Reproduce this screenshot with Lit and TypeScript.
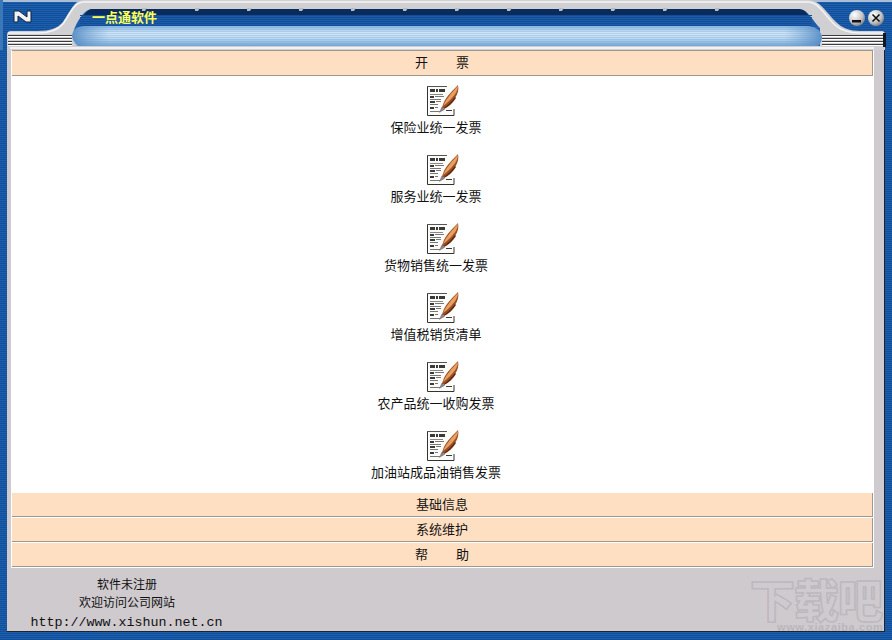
import { LitElement, html, css, svg } from "lit";
import { customElement } from "lit/decorators.js";

const items = ["保险业统一发票", "服务业统一发票", "货物销售统一发票", "增值税销货清单", "农产品统一收购发票", "加油站成品油销售发票"];

const stripes = (x: number, w: number, y0: number, y1: number, color: string, step = 2) => {
  const out = [];
  for (let y = y0; y < y1; y += step) out.push(svg`<rect x=${x} y=${y} width=${w} height="1" fill=${color} />`);
  return out;
};

const chrome = svg`<svg class="chrome" width="892" height="50" viewBox="0 0 892 50">
  <defs>
    <linearGradient id="lb" x1="0" y1="0" x2="0" y2="1">
      <stop offset="0" stop-color="#8ab8e2"/><stop offset=".35" stop-color="#d2e6f8"/><stop offset=".6" stop-color="#c0daf2"/><stop offset="1" stop-color="#76a8d6"/>
    </linearGradient>
    <linearGradient id="lbh" x1="0" y1="0" x2="1" y2="0">
      <stop offset="0" stop-color="#4f86c0" stop-opacity=".9"/><stop offset=".05" stop-color="#6fa0d0" stop-opacity="0"/>
      <stop offset=".95" stop-color="#6fa0d0" stop-opacity="0"/><stop offset="1" stop-color="#4f86c0" stop-opacity=".9"/>
    </linearGradient>
    <radialGradient id="btn" cx=".35" cy=".3" r=".8">
      <stop offset="0" stop-color="#ffffff"/><stop offset=".6" stop-color="#c4c4c4"/><stop offset="1" stop-color="#6c7480"/>
    </radialGradient>
  </defs>
  <rect width="892" height="50" fill="#1c5fae"/>
  ${stripes(0, 892, 1, 50, "#134f98")}
  <rect x="0" y="0" width="892" height="2" fill="#a9bed6"/>
  <path d="M84 0 H808 C820 0 826 12 836 22 C842 28 850 31 860 31 H882 Q885 31 885 35 V50 H7 V35 Q7 31 11 31 H38 C50 31 58 28 63 22 C70 12 74 0 84 0 Z" fill="#d0cfd2"/>
  <path d="M84 2 H808 C818 2 824 14 834 24 C840 30 850 33 860 33 H884" fill="none" stroke="#f4f4f6" stroke-width="1.5"/>
  <path d="M84 2 C74 2 70 14 63 24 C58 30 50 33 38 33 H8" fill="none" stroke="#f4f4f6" stroke-width="1.5"/>
  <path d="M92 9 H798 C808 9 812 20 820 28 V46 H78 Q72 40 73 34 C75 24 84 9 92 9 Z" fill="#1c5cab"/>
  <path d="M92 9 H798 C802 9 806 11 808 15 H84 C87 11 89 9 92 9 Z" fill="#0a2c5c"/>
  ${stripes(80, 732, 15, 27, "#124d96")}
  <path d="M86 26 H806 C814 26 820 30 822 36 C822 40 820 46 816 46 H78 Q72 40 72 36 C72 30 78 26 86 26 Z" fill="url(#lb)"/>
  <path d="M86 26 H806 C814 26 820 30 822 36 C822 40 820 46 816 46 H78 Q72 40 72 36 C72 30 78 26 86 26 Z" fill="url(#lbh)"/>
  ${stripes(74, 746, 27, 46, "#5f96cc40")}
  ${[142, 195, 247, 299, 351, 403, 455, 507, 559, 611, 663, 715].map((x) => svg`<path d=${`M${x} 8h5l-2 3h-3z`} fill="#b8bcc4"/>`)}
  ${stripes(8, 64, 35, 46, "#3c3c40", 3)}
  ${stripes(8, 64, 36, 46, "#ffffff", 3)}
  ${stripes(822, 63, 35, 46, "#3c3c40", 3)}
  ${stripes(822, 63, 36, 46, "#ffffff", 3)}
  <rect x="7" y="46" width="878" height="1" fill="#d0cfd2"/>
  <rect x="10" y="47" width="864" height="2" fill="#f2f2f4"/>
  <rect x="883" y="33" width="3" height="14" fill="#101820"/>
  <rect x="0" y="0" width="3" height="50" fill="#3b78b8"/>
  <path d="M14 11 L14 22 L18 22 L18 16 L26 22 L31 22 L31 11 L27 11 L27 17 L19 11 Z" fill="#f2f2f2" stroke="#10233f" stroke-width="1"/>
  <circle cx="857" cy="18" r="8" fill="url(#btn)"/>
  <rect x="852" y="20" width="9" height="2.5" fill="#111"/>
  <circle cx="876" cy="18" r="8" fill="url(#btn)"/>
  <path d="M872.5 14.5 L879.500 21.500 M879.500 14.500 L872.500 21.500" stroke="#111" stroke-width="1.6"/>
</svg>`;

const docIcon = svg`<svg class="icon" width="32" height="31" viewBox="0 0 32 31">
  <rect x="0" y="1" width="26" height="29" fill="#fbfbf8"/>
  <path d="M.5 1V30.500H27V24" stroke="#333" stroke-width="1" fill="none"/>
  <path d="M0 1.500H20" stroke="#555" stroke-width="1" fill="none"/>
  <g fill="#3a3a3a" shape-rendering="crispEdges">
    <rect x="3" y="4" width="5" height="3"/><rect x="9" y="4" width="2" height="3"/><rect x="12" y="4" width="6" height="3"/>
    <rect x="3" y="9" width="13" height="1" fill="#888"/>
    <rect x="3" y="11" width="4" height="2"/><rect x="8" y="11" width="9" height="1" fill="#777"/>
    <rect x="3" y="14" width="11" height="1" fill="#777"/>
    <rect x="3" y="16" width="5" height="2"/><rect x="9" y="16" width="5" height="1" fill="#777"/>
    <rect x="3" y="19" width="8" height="1" fill="#777"/>
    <rect x="3" y="22" width="4" height="2"/><rect x="8" y="22" width="3" height="1" fill="#777"/>
    <rect x="19" y="25" width="6" height="1"/><rect x="3" y="26" width="10" height="1" fill="#777"/>
  </g>
  <path d="M14 25 L17 17 C20 11 26 5 31 0 C32 4 31 9 28 13 C25 18 20 22 14 25 Z" fill="#9a4e24"/>
  <path d="M16 21 C19 14 25 7 31 1 C31 6 27 11 23 15 C21 17 19 19 16 21 Z" fill="#e8a060"/>
  <path d="M17 23 C21 20 25 16 28 12 L29 13 C26 18 21 22 17 24 Z" fill="#5e2610"/>
  <path d="M12 28 L14.500 22 L18 24.500 Z" fill="#86808e"/>
</svg>`;

@customElement("app-root")
export class AppRoot extends LitElement {
  static styles = css`
    :host {
      display: flex;
      flex-direction: column;
      position: relative;
      width: 892px;
      height: 640px;
      overflow: hidden;
      background: repeating-linear-gradient(#1c5fae 0 1px, #134f98 1px 2px);
      font-family: "Noto Sans CJK SC", "Liberation Sans", sans-serif;
      font-size: 13px;
      color: #111;
    }
    .top { height: 50px; flex: none; position: relative; }
    .chrome { display: block; }
    .title {
      position: absolute;
      left: 92px;
      top: 8px;
      font-weight: 700;
      font-size: 13px;
      line-height: 18px;
      color: #ffff55;
    }
    .frame {
      flex: 1;
      margin: 0 7px 8px 7px;
      background: #cecace;
      display: flex;
      flex-direction: column;
      border-bottom: 1px solid #1c2430;
      border-right: 1px solid #1c2430;
      min-height: 0;
    }
    .panel {
      margin: 0 10px 0 4px;
      flex: none;
      display: flex;
      flex-direction: column;
      background: #fff;
      border-left: 1px solid #fff;
      border-right: 1px solid #fff;
    }
    .bar {
      height: 24px;
      box-sizing: border-box;
      flex: none;
      background: #ffdfc2;
      border-bottom: 1px solid #9c9890;
      border-right: 1px solid #9c9890;
      display: flex;
      align-items: center;
      justify-content: center;
      line-height: 1;
      margin-bottom: 1px;
      padding-bottom: 2px;
      color: #111;
    }
    .bar.first { height: 26px; border-top: 1px solid #9c9890; margin-bottom: 0; padding-bottom: 3px; }
    .bar .gap { word-spacing: 25px; }
    .list {
      height: 417px;
      padding: 9px 13px 0 0;
      box-sizing: border-box;
      display: flex;
      flex-direction: column;
      align-items: center;
      background: #fff;
    }
    .item {
      height: 69px;
      flex: none;
      display: flex;
      flex-direction: column;
      align-items: center;
      box-sizing: border-box;
    }
    .icon { display: block; margin-left: 14px; }
    .label { margin-top: 2px; line-height: 18px; white-space: nowrap; color: #111; }
    .foot {
      padding-top: 7px;
      margin-left: 12px;
      text-align: center;
      font-size: 12px;
      line-height: 18px;
      flex: none;
      width: 216px;
    }
    .url { font-family: "Liberation Mono", monospace; font-size: 13.33px; line-height: 20px; white-space: nowrap; margin: 2px 0 0 -1px; }
    .mark {
      position: absolute;
      left: 750px;
      top: 577px;
      font-size: 45px;
      font-weight: 900;
      line-height: 44px;
      letter-spacing: -1px;
      white-space: nowrap;
      color: #cecace;
      -webkit-text-stroke: 1.5px #bcb8be;
    }
    .markurl {
      position: absolute;
      left: 777px;
      top: 622px;
      font-family: "Liberation Sans", sans-serif;
      font-size: 11px;
      font-weight: 700;
      letter-spacing: 0.6px;
      line-height: 10px;
      color: #bab6bc;
      white-space: nowrap;
    }
  `;

  render() {
    return html`
      <div class="top">${chrome}<div class="title">一点通软件</div></div>
      <div class="frame">
        <div class="panel">
          <div class="bar first"><span class="gap">开 票</span></div>
          <div class="list">
            ${items.map((t) => html`<div class="item">${docIcon}<div class="label">${t}</div></div>`)}
          </div>
          <div class="bar">基础信息</div>
          <div class="bar">系统维护</div>
          <div class="bar"><span class="gap">帮 助</span></div>
        </div>
        <div class="foot">
          <div>软件未注册</div>
          <div>欢迎访问公司网站</div>
          <div class="url">http://www.xishun.net.cn</div>
        </div>
      </div>
      <div class="mark">下载吧</div>
      <div class="markurl">www.xiazaiba.com</div>
    `;
  }
}
